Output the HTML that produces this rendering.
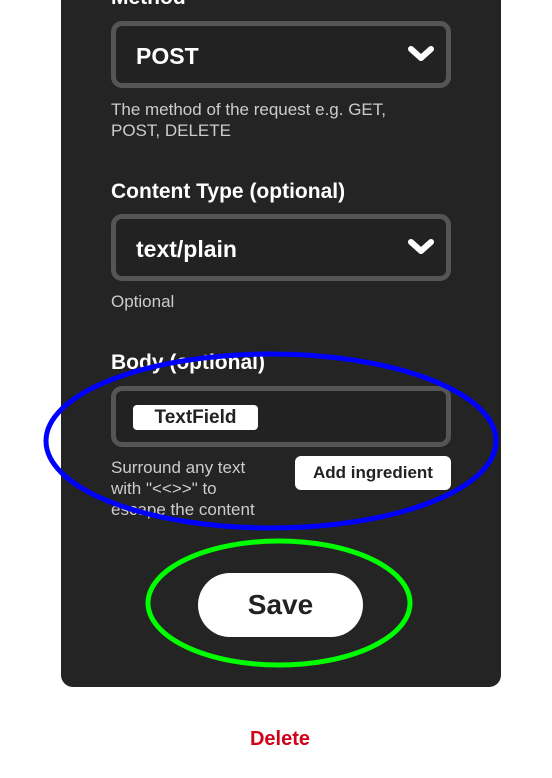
<!DOCTYPE html>
<html><head><meta charset="utf-8"><style>
*{margin:0;padding:0;box-sizing:border-box}
body{width:552px;height:778px;background:#fff;position:relative;overflow:hidden;font-family:"Liberation Sans",sans-serif}
.panel{position:absolute;left:61px;top:-20px;width:440px;height:707px;background:#242424;border-radius:12px}
.abs{position:absolute}
.lbl{color:#fff;font-weight:bold;font-size:21px}
.sel{position:absolute;left:111px;width:340px;border:5px solid #555;border-radius:11px;background:#222}
.sel span{position:absolute;left:20px;color:#fff;font-weight:bold;font-size:23px}
.help{color:#ccc;font-size:17px;line-height:21px}
</style></head><body>
<div class="panel"></div>
<div class="abs lbl" style="left:111px;top:-14px">Method</div>
<div class="sel" style="top:21px;height:67px"><span style="top:17px">POST</span>
<svg class="abs" style="left:290px;top:17px" width="30" height="22" viewBox="0 0 30 22"><path d="M5 6 L15 15 L25 6" stroke="#fff" stroke-width="6" fill="none" stroke-linecap="round" stroke-linejoin="round"/></svg></div>
<div class="abs help" style="left:111px;top:99px">The method of the request e.g. GET,<br>POST, DELETE</div>
<div class="abs lbl" style="left:111px;top:180px">Content Type (optional)</div>
<div class="sel" style="top:214px;height:67px"><span style="top:17px">text/plain</span>
<svg class="abs" style="left:290px;top:17px" width="30" height="22" viewBox="0 0 30 22"><path d="M5 6 L15 15 L25 6" stroke="#fff" stroke-width="6" fill="none" stroke-linecap="round" stroke-linejoin="round"/></svg></div>
<div class="abs help" style="left:111px;top:291px">Optional</div>
<div class="abs lbl" style="left:111px;top:351px">Body (optional)</div>
<div class="sel" style="top:386px;height:61px"></div>
<div class="abs" style="left:133px;top:405px;width:125px;height:25px;background:#fff;border-radius:4px;color:#222;font-size:19px;font-weight:bold;text-align:center;line-height:25px">TextField</div>
<div class="abs help" style="left:111px;top:457px">Surround any text<br>with "&lt;&lt;&gt;&gt;" to<br>escape the content</div>
<div class="abs" style="left:295px;top:456px;width:156px;height:34px;background:#fff;border-radius:6px;color:#222;font-size:17px;font-weight:bold;text-align:center;line-height:34px">Add ingredient</div>
<div class="abs" style="left:198px;top:573px;width:165px;height:64px;background:#fff;border-radius:32px;color:#222;font-size:28px;font-weight:bold;text-align:center;line-height:64px">Save</div>
<div class="abs" style="left:0;width:560px;top:728px;text-align:center;color:#d0021b;font-size:20px;font-weight:bold">Delete</div>
<svg class="abs" style="left:0;top:0" width="552" height="778"><ellipse cx="271" cy="441" rx="225" ry="87" fill="none" stroke="#0000ff" stroke-width="5"/><ellipse cx="279" cy="603" rx="131" ry="62" fill="none" stroke="#00ff00" stroke-width="5"/></svg>
</body></html>
